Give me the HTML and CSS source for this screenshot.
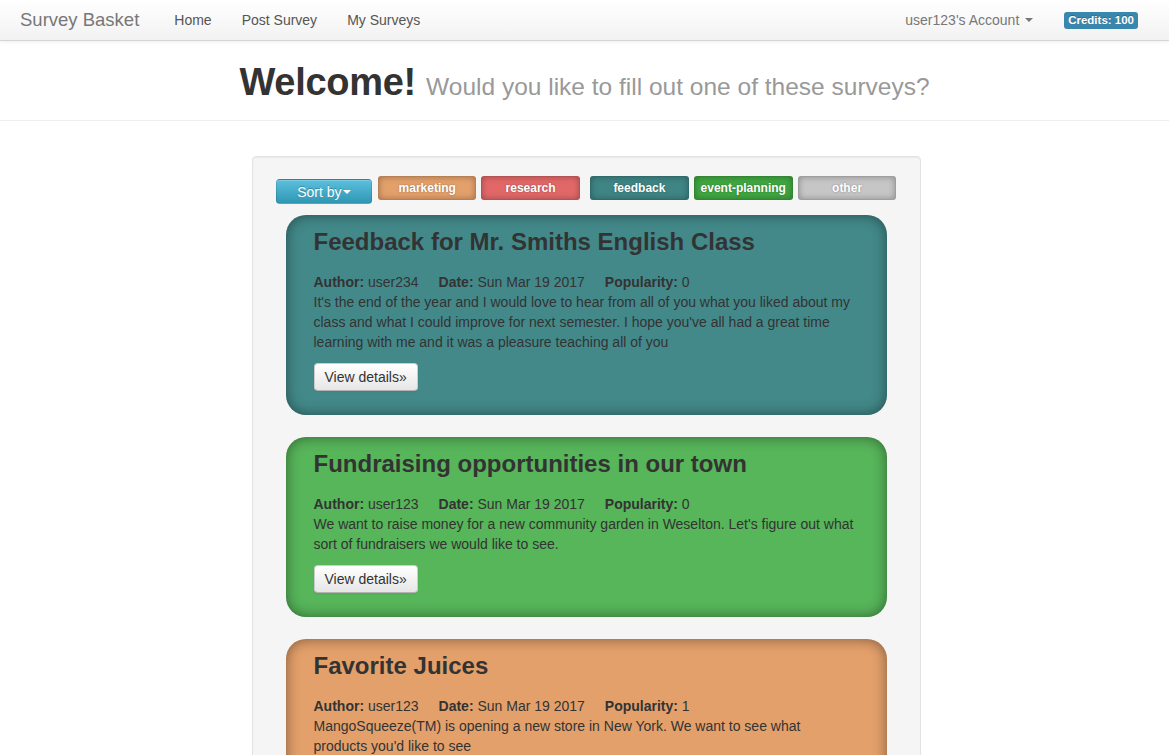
FILE: index.html
```html
<!DOCTYPE html>
<html>
<head>
<meta charset="utf-8">
<title>Survey Basket</title>
<link rel="stylesheet" href="styles.css">
</head>
<body>
<div class="navbar">
  <div class="nav-left">
    <a class="brand">Survey Basket</a>
    <a class="nav-link">Home</a>
    <a class="nav-link">Post Survey</a>
    <a class="nav-link">My Surveys</a>
  </div>
  <div class="nav-right">
    <a class="nav-link account">user123's Account <span class="caret"></span></a>
    <span class="badge">Credits: 100</span>
  </div>
</div>

<div class="page-header">
  <h1>Welcome! <small>Would you like to fill out one of these surveys?</small></h1>
</div>

<div class="well">
  <div class="toolbar">
    <button class="btn-sort">Sort by<span class="caret white"></span></button>
    <span class="tag tag-marketing">marketing</span>
    <span class="tag tag-research">research</span>
    <span class="tag tag-feedback">feedback</span>
    <span class="tag tag-event">event-planning</span>
    <span class="tag tag-other">other</span>
  </div>

  <div class="card card-feedback">
    <h2>Feedback for Mr. Smiths English Class</h2>
    <div class="meta"><span><b>Author:</b> user234</span><span><b>Date:</b> Sun Mar 19 2017</span><span><b>Popularity:</b> 0</span></div>
    <p>It's the end of the year and I would love to hear from all of you what you liked about my class and what I could improve for next semester. I hope you've all had a great time learning with me and it was a pleasure teaching all of you</p>
    <button class="btn-details">View details»</button>
  </div>

  <div class="card card-event">
    <h2>Fundraising opportunities in our town</h2>
    <div class="meta"><span><b>Author:</b> user123</span><span><b>Date:</b> Sun Mar 19 2017</span><span><b>Popularity:</b> 0</span></div>
    <p>We want to raise money for a new community garden in Weselton. Let's figure out what sort of fundraisers we would like to see.</p>
    <button class="btn-details">View details»</button>
  </div>

  <div class="card card-marketing">
    <h2>Favorite Juices</h2>
    <div class="meta"><span><b>Author:</b> user123</span><span><b>Date:</b> Sun Mar 19 2017</span><span><b>Popularity:</b> 1</span></div>
    <p>MangoSqueeze(TM) is opening a new store in New York. We want to see what products you'd like to see</p>
    <button class="btn-details">View details»</button>
  </div>
</div>
</body>
</html>
```

FILE: styles.css
```css
* { box-sizing: border-box; }
html, body { margin: 0; padding: 0; }
body {
  font-family: "Liberation Sans", Arial, sans-serif;
  font-size: 14px;
  line-height: 20px;
  color: #333;
  background: #fff;
}

.navbar {
  height: 41px;
  display: flex;
  justify-content: space-between;
  align-items: flex-start;
  background: linear-gradient(to bottom, #ffffff, #f2f2f2);
  border-bottom: 1px solid #d4d4d4;
  box-shadow: 0 1px 4px rgba(0,0,0,0.065);
}
.nav-left, .nav-right { display: flex; align-items: center; }
.brand {
  font-size: 18.5px;
  font-weight: 300;
  color: #777;
  padding: 10px 20px 10px 20px;
  line-height: 20px;
}
.nav-link {
  color: #555;
  padding: 10px 15px;
  line-height: 20px;
  font-size: 14px;
}
.account { color: #777; padding-right: 31px; padding-left: 12px; }
.caret {
  display: inline-block;
  width: 0; height: 0;
  border-top: 4px solid #777;
  border-left: 4px solid transparent;
  border-right: 4px solid transparent;
  vertical-align: middle;
  margin-left: 2px;
  margin-top: -2px;
}
.caret.white { border-top-color: #fff; margin-left: 1px; }
.badge {
  background: #3a87ad;
  color: #fff;
  font-weight: bold;
  font-size: 11.5px;
  line-height: 13px;
  padding: 2px 4px;
  border-radius: 3px;
  margin-right: 31px;
  text-shadow: 0 -1px 0 rgba(0,0,0,0.25);
}

.page-header {
  padding: 21px 0 13px;
  border-bottom: 1px solid #eee;
  text-align: center;
}
.page-header h1 {
  margin: 0;
  font-size: 38px;
  line-height: 40px;
  font-weight: bold;
  color: #333;
  letter-spacing: -0.3px;
}
.page-header small {
  font-size: 24.5px;
  font-weight: normal;
  color: #999;
  letter-spacing: 0;
}

.well {
  width: 669px;
  margin: 35px 0 0 calc(50% - 333px);
  background: #f5f5f5;
  border: 1px solid #e3e3e3;
  border-radius: 4px;
  padding: 19px 23px 20px 23px;
  box-shadow: inset 0 1px 1px rgba(0,0,0,0.05);
}
.toolbar {
  display: flex;
  align-items: flex-start;
  margin-bottom: 11px;
}
.btn-sort {
  width: 97px;
  height: 25px;
  margin-top: 3px;
  margin-right: 5px;
  font-family: inherit;
  font-size: 14px;
  color: #fff;
  background: linear-gradient(to bottom, #5bc0de, #2f96b4);
  border: 1px solid rgba(0,0,0,0.12);
  border-radius: 4px;
  text-shadow: 0 -1px 0 rgba(0,0,0,0.25);
  padding: 0;
  box-shadow: inset 0 1px 0 rgba(255,255,255,0.2);
}
.tag {
  width: 99px;
  height: 24px;
  line-height: 22px;
  text-align: center;
  color: #fff;
  font-weight: bold;
  font-size: 12px;
  border-radius: 3px;
  border: 1px solid rgba(0,0,0,0.2);
  text-shadow: 0 0 2px rgba(0,0,0,0.35);
  box-shadow: inset 0 0 6px rgba(0,0,0,0.3);
  margin-left: 5px;
}
.tag-marketing { background: #e3a06b; margin-left: 1px; width: 98px; }
.tag-research { background: #e26868; }
.tag-feedback { background: #3f8585; margin-left: 10px; }
.tag-event { background: #40a640; }
.tag-other { background: #c6c6c6; }

.card {
  margin: 0 10px 22px;
  border-radius: 20px;
  padding: 6px 30px 24px 28px;
  box-shadow: inset 0 0 14px rgba(0,0,0,0.45);
}
.card-feedback { background: #43898a; }
.card-event { background: #57b55a; }
.card-marketing { background: #e3a06b; }
.card h2 {
  margin: 3px 0 12px;
  font-size: 24px;
  line-height: 36px;
  font-weight: bold;
  color: #333;
}
.meta { display: flex; gap: 20px; }
.card p { margin: 0 0 11px; }
.btn-details {
  font-family: inherit;
  font-size: 14px;
  color: #333;
  height: 28px;
  padding: 0 10px;
  background: linear-gradient(to bottom, #ffffff, #e6e6e6);
  border: 1px solid #ccc;
  border-bottom-color: #b3b3b3;
  border-radius: 4px;
  box-shadow: inset 0 1px 0 rgba(255,255,255,0.2), 0 1px 2px rgba(0,0,0,0.05);
}
```
